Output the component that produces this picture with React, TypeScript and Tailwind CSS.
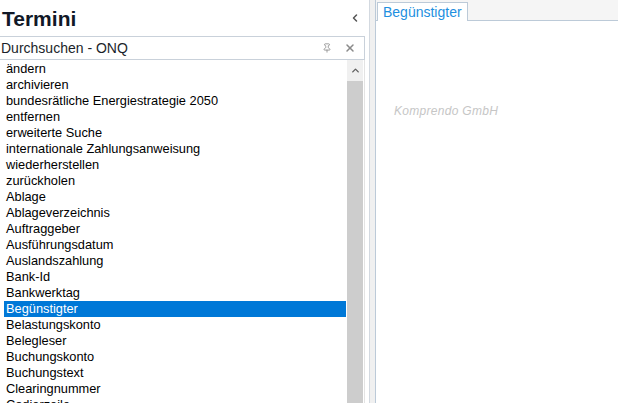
import React from 'react';
import { ChevronLeft, ChevronUp, X, Pin } from 'lucide-react';

const terms = [
  'ändern',
  'archivieren',
  'bundesrätliche Energiestrategie 2050',
  'entfernen',
  'erweiterte Suche',
  'internationale Zahlungsanweisung',
  'wiederherstellen',
  'zurückholen',
  'Ablage',
  'Ablageverzeichnis',
  'Auftraggeber',
  'Ausführungsdatum',
  'Auslandszahlung',
  'Bank-Id',
  'Bankwerktag',
  'Begünstigter',
  'Belastungskonto',
  'Belegleser',
  'Buchungskonto',
  'Buchungstext',
  'Clearingnummer',
  'Codierzeile',
];

const selected = 'Begünstigter';

const App: React.FC = () => {
  return (
    <div className="w-[618px] h-[403px] flex bg-[#f0f0f0] overflow-hidden font-['Liberation_Sans',Arial,sans-serif]">
      {/* glossary panel */}
      <div className="w-[370px] h-full flex flex-col bg-white border-r border-[#d3d9e0]">
        <div className="h-[36px] flex items-center justify-between pl-[2px] pr-[8px]">
          <h1 className="text-[21px] font-bold text-[#111827] leading-none">Termini</h1>
          <ChevronLeft size={12} strokeWidth={3} className="text-[#555]" />
        </div>

        <div className="w-[365px] h-[24px] flex items-center justify-between border-y border-r border-[#c9d1da] pl-[1px] pr-[8px]">
          <span className="text-[14px] text-[#1b1f2a]">Durchsuchen - ONQ</span>
          <div className="flex items-center gap-[12px] text-[#8a8a8a]">
            <Pin size={10} strokeWidth={2} />
            <X size={12} strokeWidth={3} />
          </div>
        </div>

        <div className="w-[365px] flex-1 min-h-0 flex border-r border-[#e3e3e3] pl-[4px] pt-[1px]">
          <ul className="flex-1 mr-[1px] overflow-hidden">
            {terms.map(t => (
              <li
                key={t}
                className={
                  'h-[16px] leading-[16px] pl-[2px] text-[12.8px] whitespace-nowrap ' +
                  (t === selected ? 'bg-[#0078d7] text-white' : 'text-black')
                }
              >
                {t}
              </li>
            ))}
          </ul>
          <div className="w-[16px] mr-[1px] -mt-[1px] flex flex-col">
            <div className="h-[21px] bg-[#f0f0f0] flex items-center justify-center">
              <ChevronUp size={11} strokeWidth={3} className="text-[#606060]" />
            </div>
            <div className="flex-1 bg-[#cdcdcd]" />
          </div>
        </div>
      </div>

      <div className="w-[5px]" />

      {/* detail panel */}
      <div className="flex-1 h-full flex flex-col bg-white border-l border-[#bccad8]">
        <div className="h-[21px] flex items-end bg-[#f5f5f5] border-b border-[#bccad8] pl-[1px]">
          <div className="h-[19px] -mb-[1px] px-[5px] bg-white border border-b-0 border-[#bccad8] text-[14px] leading-[18px] text-[#1e8fe0]">
            Begünstigter
          </div>
        </div>
        <div className="flex-1 pl-[18px] pt-[77px]">
          <span className="italic text-[12px] tracking-[0.3px] text-[#c6c6c6]">Komprendo GmbH</span>
        </div>
      </div>
    </div>
  );
};

export default App;
